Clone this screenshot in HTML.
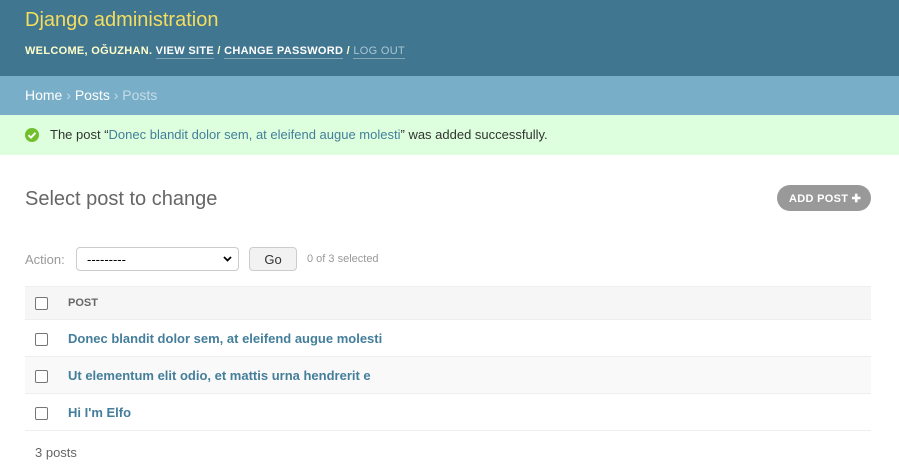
<!DOCTYPE html>
<html><head><style>
*{box-sizing:border-box}
body{margin:0;width:899px;height:468px;overflow:hidden;font-family:"Liberation Sans",sans-serif;background:#fff;color:#333;font-size:13px}
#header{background:#417690;height:76px;padding:0 25px;position:relative}
#branding{position:absolute;left:25px;top:9px;color:#f5dd5d;font-size:20px}
#tools{position:absolute;left:25px;top:45px;color:#ffc;font-size:11px;font-weight:bold;letter-spacing:.3px}
#tools a{color:#fff;border-bottom:1px solid rgba(255,255,255,.35);text-decoration:none;padding-bottom:1px}
#tools a.lo{color:#a8c6d6;font-weight:normal}
#bc{background:#79aec8;height:39px;padding:11px 25px;color:#c4dce8;font-size:14px}
#bc a{color:#fff}
#msg{background:#dfd;height:40px;padding:12px 0 0 50px;position:relative;font-size:13px}
#msg .ic{position:absolute;left:25px;top:13px;width:14px;height:14px;border-radius:50%;background:#70bf2b}
#msg a{color:#447e9b}
h1{position:absolute;left:25px;top:188px;margin:0;font-weight:300;font-size:20px;color:#666}
#add{position:absolute;left:777px;top:185px;width:94px;height:26px;border-radius:13px;background:#999;color:#fff;font-size:11px;font-weight:bold;padding:7px 0 0 12px;letter-spacing:.3px}
#act{position:absolute;left:25px;top:247px;width:846px;height:24px;color:#999;font-size:13px}
.sel{position:absolute;left:51px;top:0;width:163px;height:24px;border:1px solid #ccc;border-radius:4px;padding:4px 10px;color:#000;font-size:13px}
.go{position:absolute;left:224px;top:0;width:48px;height:24px;border:1px solid #ccc;border-radius:4px;background:#f2f2f2;color:#333;text-align:center;padding-top:4px}
table{position:absolute;left:25px;top:286px;width:846px;border-collapse:collapse}
th{background:#f6f6f6;height:33px;text-align:left;font-size:11px;color:#666;border-top:1px solid #eee;border-bottom:1px solid #eee;padding:0}
td{height:37px;border-bottom:1px solid #eee;padding:0;font-size:13px;font-weight:bold;color:#447e9b}
.cb{width:43px;padding-left:10px}
.cb span{display:inline-block;width:13px;height:13px;border:1px solid #767676;border-radius:2px;background:#fff;vertical-align:middle}
tr.alt td{background:#f9f9f9}
#cnt{position:absolute;left:35px;top:445px;color:#666;font-size:13px}
</style></head><body>
<div id="header"><div id="branding">Django administration</div>
<div id="tools">WELCOME, OĞUZHAN. <a>VIEW SITE</a> / <a>CHANGE PASSWORD</a> / <a class="lo">LOG OUT</a></div></div>
<div id="bc"><a>Home</a> › <a>Posts</a> › Posts</div>
<div id="msg"><div class="ic"><svg width="14" height="14" viewBox="0 0 14 14"><path d="M3.5 7.2l2.5 2.4 4.5-4.8" stroke="#fff" stroke-width="2" fill="none"/></svg></div>The post “<a>Donec blandit dolor sem, at eleifend augue molesti</a>” was added successfully.</div>
<h1>Select post to change</h1>
<div id="add">ADD POST ✚</div>
<div id="act"><span style="position:absolute;top:5px">Action:</span><div class="sel">---------<svg style="position:absolute;right:6px;top:8px" width="9" height="6" viewBox="0 0 9 6"><path d="M1 1l3.5 3.5L8 1" stroke="#000" stroke-width="1.8" fill="none"/></svg></div><div class="go">Go</div><span style="position:absolute;left:282px;top:6px;font-size:11px">0 of 3 selected</span></div>
<table><tr><th class="cb"><span></span></th><th>POST</th></tr>
<tr><td class="cb"><span></span></td><td>Donec blandit dolor sem, at eleifend augue molesti</td></tr>
<tr class="alt"><td class="cb"><span></span></td><td>Ut elementum elit odio, et mattis urna hendrerit e</td></tr>
<tr><td class="cb"><span></span></td><td>Hi I'm Elfo</td></tr></table>
<div id="cnt">3 posts</div>
</body></html>
